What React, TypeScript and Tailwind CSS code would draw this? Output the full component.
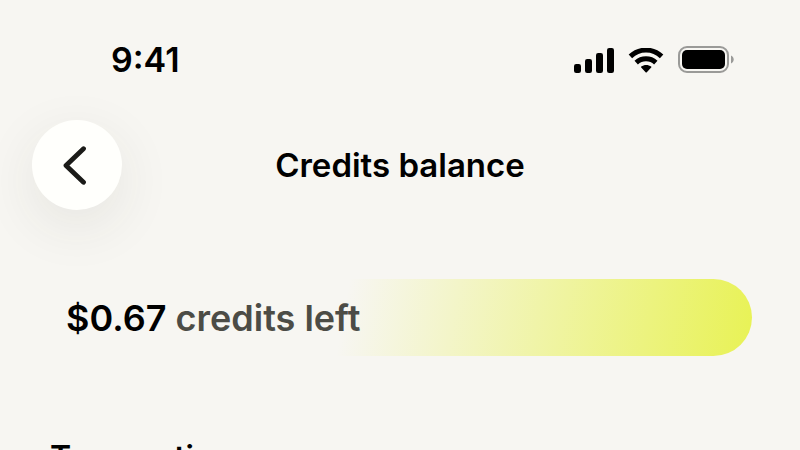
const bars = [
  { x: 0, y: 16, height: 9 },
  { x: 11, y: 11, height: 14 },
  { x: 22, y: 5, height: 20 },
  { x: 33, y: 0, height: 25 },
];

function StatusBar() {
  return (
    <div className="flex h-[120px] items-center justify-between pl-[111px] pr-[66px]">
      <span className="text-[34px] leading-10 font-semibold">9:41</span>
      <div className="flex items-center gap-[14px]">
        <svg className="h-[25px] w-10" viewBox="0 0 40 25" fill="currentColor" aria-hidden="true">
          {bars.map((bar) => (
            <rect key={bar.x} x={bar.x} y={bar.y} width="7" height={bar.height} rx="2.2" />
          ))}
        </svg>
        <svg className="h-[25px] w-9" viewBox="0 0 36 25" fill="none" stroke="currentColor" strokeWidth="5" aria-hidden="true">
          <path d="M2.4 8.4a22.5 22.5 0 0 1 31.2 0" />
          <path d="M8.200 14.600a14.500 14.500 0 0 1 19.600 0" />
          <path d="M23.2 18.6c.3.3.3.7 0 1l-4.400 4.600c-.3.3-.9.3-1.200 0l-4.400-4.600c-.3-.3-.3-.7 0-1 2.800-2.200 7.200-2.200 10 0z" fill="currentColor" stroke="none" />
        </svg>
        <svg className="h-7 w-14" viewBox="0 0 56 28" aria-hidden="true">
          <rect x="1" y="1" width="49" height="25" rx="8" fill="none" stroke="#9a9a98" strokeWidth="2" />
          <rect x="4" y="4" width="43" height="19" rx="5" fill="currentColor" />
          <path d="M53 9.5v8c1.6-.7 2.7-2.2 2.7-4s-1.1-3.3-2.7-4z" fill="#9a9a98" />
        </svg>
      </div>
    </div>
  );
}

function Header() {
  return (
    <header className="grid grid-cols-[90px_1fr_90px] items-center px-8">
      <button
        type="button"
        aria-label="Back"
        className="flex size-[90px] items-center justify-center rounded-full bg-[#fffffc] text-[#1b1b18] shadow-[0_16px_56px_rgba(60,60,40,0.09)]"
      >
        <svg className="h-10 w-8" viewBox="0 0 32 40" fill="none" stroke="currentColor" strokeWidth="4.8" strokeLinecap="round" strokeLinejoin="round" aria-hidden="true">
          <path d="M22.5 3.7 5 20.5l17.5 16.8" />
        </svg>
      </button>
      <h1 className="text-center text-[33px] leading-10 font-semibold">Credits balance</h1>
    </header>
  );
}

export default function App() {
  return (
    <div className="h-screen overflow-hidden bg-[#f7f6f2] font-['Inter',sans-serif] text-black">
      <StatusBar />
      <Header />
      <main className="px-12 pt-[69px]">
        <div className="flex h-[77px] items-center rounded-full bg-linear-[100deg,transparent_42%,#e8f255] pl-[18px]">
          <p className="text-4xl font-semibold">
            $0.67 <span className="text-[#4c4c46]">credits left</span>
          </p>
        </div>
        <h2 className="mt-[82px] pl-0.5 text-[32px] leading-10 font-semibold">Transactions</h2>
      </main>
    </div>
  );
}
